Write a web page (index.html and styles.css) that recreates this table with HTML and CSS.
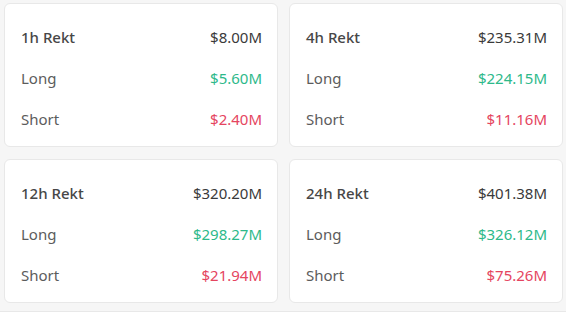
FILE: index.html
```html
<!DOCTYPE html>
<html>
<head>
<meta charset="utf-8">
<link rel="stylesheet" href="styles.css">
</head>
<body>
<div class="grid">
  <div class="card">
    <div class="row"><span class="title">1h Rekt</span><span class="total">$8.00M</span></div>
    <div class="row"><span class="label">Long</span><span class="long">$5.60M</span></div>
    <div class="row"><span class="label">Short</span><span class="short">$2.40M</span></div>
  </div>
  <div class="card">
    <div class="row"><span class="title">4h Rekt</span><span class="total">$235.31M</span></div>
    <div class="row"><span class="label">Long</span><span class="long">$224.15M</span></div>
    <div class="row"><span class="label">Short</span><span class="short">$11.16M</span></div>
  </div>
  <div class="card">
    <div class="row"><span class="title">12h Rekt</span><span class="total">$320.20M</span></div>
    <div class="row"><span class="label">Long</span><span class="long">$298.27M</span></div>
    <div class="row"><span class="label">Short</span><span class="short">$21.94M</span></div>
  </div>
  <div class="card">
    <div class="row"><span class="title">24h Rekt</span><span class="total">$401.38M</span></div>
    <div class="row"><span class="label">Long</span><span class="long">$326.12M</span></div>
    <div class="row"><span class="label">Short</span><span class="short">$75.26M</span></div>
  </div>
</div>
<div class="next"></div>
</body>
</html>
```
FILE: styles.css
```css
html, body {
  margin: 0;
  padding: 0;
  background: #f6f6f6;
  font-family: "Noto Sans", "Open Sans", sans-serif;
  font-size: 15px;
  overflow: hidden;
}
.grid {
  display: grid;
  grid-template-columns: 274px 274px;
  column-gap: 11px;
  row-gap: 12px;
  padding: 3px 0 0 4px;
}
.card {
  background: #fff;
  border: 1px solid #e8e8e8;
  border-radius: 6px;
  height: 144px;
  box-sizing: border-box;
  padding: 22px 15px 0 16px;
  display: flex;
  flex-direction: column;
  gap: 19px;
}
.row {
  display: flex;
  justify-content: space-between;
  align-items: center;
  height: 22px;
  line-height: 22px;
}
.title {
  color: #474747;
  font-weight: 500;
}
.total {
  color: #3a3a3a;
}
.label {
  color: #5c5c5c;
}
.long {
  color: #2db98a;
}
.short {
  color: #e5455f;
}
.next {
  margin-top: 8px;
  height: 2px;
  background: #fff;
  border-top: 1px solid #e8e8e8;
}
```
